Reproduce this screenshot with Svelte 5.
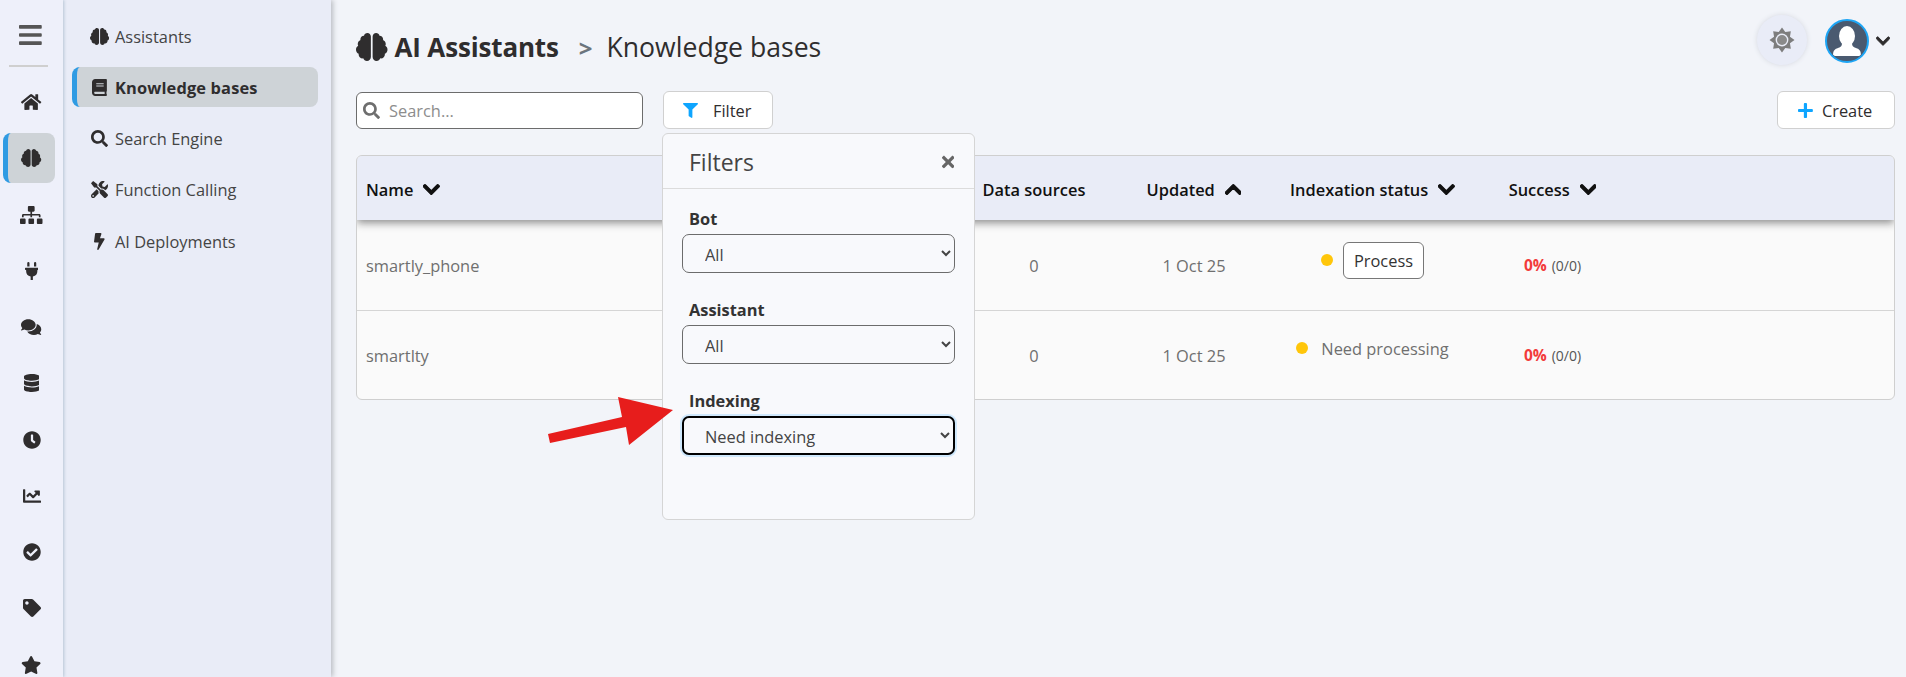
<script>
  const icons = {
    bars: [448, "M16 132h416c8.837 0 16-7.163 16-16V76c0-8.837-7.163-16-16-16H16C7.163 60 0 67.163 0 76v40c0 8.837 7.163 16 16 16zm0 160h416c8.837 0 16-7.163 16-16v-40c0-8.837-7.163-16-16-16H16c-8.837 0-16 7.163-16 16v40c0 8.837 7.163 16 16 16zm0 160h416c8.837 0 16-7.163 16-16v-40c0-8.837-7.163-16-16-16H16c-8.837 0-16 7.163-16 16v40c0 8.837 7.163 16 16 16z"],
    search: [512, "M505 442.7L405.3 343c-4.5-4.5-10.6-7-17-7H372c27.6-35.3 44-79.7 44-128C416 93.1 322.9 0 208 0S0 93.1 0 208s93.1 208 208 208c48.3 0 92.7-16.4 128-44v16.3c0 6.4 2.5 12.5 7 17l99.7 99.7c9.4 9.4 24.6 9.4 33.9 0l28.3-28.3c9.4-9.4 9.4-24.6.1-34zM208 336c-70.7 0-128-57.2-128-128 0-70.7 57.2-128 128-128 70.7 0 128 57.2 128 128 0 70.7-57.2 128-128 128z"],
    down: [448, "M207.029 381.476L12.686 187.132c-9.373-9.373-9.373-24.569 0-33.941l22.667-22.667c9.357-9.357 24.522-9.375 33.901-.04L224 284.505l154.745-154.021c9.379-9.335 24.544-9.317 33.901.04l22.667 22.667c9.373 9.373 9.373 24.569 0 33.941L240.971 381.476c-9.373 9.372-24.569 9.372-33.942 0z"],
    up: [448, "M240.971 130.524l194.343 194.343c9.373 9.373 9.373 24.569 0 33.941l-22.667 22.667c-9.357 9.357-24.522 9.375-33.901.04L224 227.495 69.255 381.516c-9.379 9.335-24.544 9.317-33.901-.04l-22.667-22.667c-9.373-9.373-9.373-24.569 0-33.941L207.03 130.525c9.372-9.373 24.568-9.373 33.941-.001z"],
    filter: [512, "M487.976 0H24.028C2.71 0-8.047 25.866 7.058 40.971L192 225.941V432c0 7.831 3.821 15.17 10.237 19.662l80 55.98C298.02 518.69 320 507.493 320 487.98V225.941l184.947-184.97C520.021 25.896 509.338 0 487.976 0z"],
    plus: [448, "M416 208H272V64c0-17.67-14.33-32-32-32h-32c-17.67 0-32 14.33-32 32v144H32c-17.67 0-32 14.33-32 32v32c0 17.67 14.33 32 32 32h144v144c0 17.67 14.33 32 32 32h32c17.67 0 32-14.33 32-32V304h144c17.67 0 32-14.33 32-32v-32c0-17.67-14.33-32-32-32z"],
    times: [352, "M242.72 256l100.07-100.07c12.28-12.28 12.28-32.19 0-44.48l-22.24-22.24c-12.28-12.28-32.19-12.28-44.48 0L176 189.28 75.93 89.21c-12.28-12.28-32.19-12.28-44.48 0L9.21 111.45c-12.28 12.28-12.28 32.19 0 44.48L109.28 256 9.21 356.07c-12.28 12.28-12.28 32.19 0 44.48l22.24 22.24c12.28 12.28 32.2 12.28 44.48 0L176 322.72l100.07 100.07c12.28 12.28 32.2 12.28 44.48 0l22.24-22.24c12.28-12.28 12.28-32.19 0-44.48L242.72 256z"],
    home: [576, "M280.37 148.26L96 300.11V464a16 16 0 0 0 16 16l112.06-.29a16 16 0 0 0 15.92-16V368a16 16 0 0 1 16-16h64a16 16 0 0 1 16 16v95.64a16 16 0 0 0 16 16.05L464 480a16 16 0 0 0 16-16V300L295.67 148.26a12.19 12.19 0 0 0-15.3 0zM571.6 251.47L488 182.56V44.05a12 12 0 0 0-12-12h-56a12 12 0 0 0-12 12v72.61L318.47 43a48 48 0 0 0-61 0L4.34 251.47a12 12 0 0 0-1.6 16.9l25.5 31A12 12 0 0 0 45.15 301l235.22-193.74a12.19 12.19 0 0 1 15.3 0L530.9 301a12 12 0 0 0 16.9-1.6l25.5-31a12 12 0 0 0-1.7-16.93z"],
    bolt: [320, "M296 160H180.6l42.6-129.8C227.2 15 215.7 0 200 0H56C44 0 33.8 8.9 32.2 20.8l-32 240C-1.7 275.2 9.5 288 24 288h118.7L96.6 482.5c-3.6 15.2 8 29.5 23.3 29.5 8.4 0 16.4-4.4 20.8-12l176-304c9.3-15.9-2.2-36-20.7-36z"],
    star: [576, "M259.3 17.8L194 150.2 47.9 171.5c-26.2 3.8-36.7 36.1-17.7 54.6l105.7 103-25 145.5c-4.5 26.3 23.2 46 46.4 33.7L288 439.6l130.7 68.7c23.2 12.2 50.9-7.4 46.4-33.7l-25-145.5 105.7-103c19-18.5 8.5-50.8-17.7-54.6L382 150.2 316.7 17.8c-11.7-23.6-45.6-23.9-57.4 0z"],
    check: [512, "M504 256c0 136.967-111.033 248-248 248S8 392.967 8 256 119.033 8 256 8s248 111.033 248 248zM227.314 387.314l184-184c6.248-6.248 6.248-16.379 0-22.627l-22.627-22.627c-6.248-6.249-16.379-6.249-22.628 0L216 308.118l-70.059-70.059c-6.248-6.248-16.379-6.248-22.628 0l-22.627 22.627c-6.248 6.248-6.248 16.379 0 22.627l104 104c6.249 6.249 16.379 6.249 22.628.001z"],
    clock: [512, "M256,8C119,8,8,119,8,256S119,504,256,504,504,393,504,256,393,8,256,8Zm92.49,313h0l-20,25a16,16,0,0,1-22.49,2.5h0l-67-49.72a40,40,0,0,1-15-31.23V112a16,16,0,0,1,16-16h32a16,16,0,0,1,16,16V256l58,42.5A16,16,0,0,1,348.49,321Z"],
    tag: [512, "M0 252.118V48C0 21.49 21.49 0 48 0h204.118a48 48 0 0 1 33.941 14.059l211.882 211.882c18.745 18.745 18.745 49.137 0 67.882L293.823 497.941c-18.745 18.745-49.137 18.745-67.882 0L14.059 286.059A48 48 0 0 1 0 252.118zM112 64c-26.51 0-48 21.49-48 48s21.49 48 48 48 48-21.49 48-48-21.49-48-48-48z"],
    database: [448, "M448 73.143v45.714C448 159.143 347.667 192 224 192S0 159.143 0 118.857V73.143C0 32.857 100.333 0 224 0s224 32.857 224 73.143zM448 176v102.857C448 319.143 347.667 352 224 352S0 319.143 0 278.857V176c48.125 33.143 136.208 48.572 224 48.572S399.874 209.143 448 176zm0 160v102.857C448 479.143 347.667 512 224 512S0 479.143 0 438.857V336c48.125 33.143 136.208 48.572 224 48.572S399.874 369.143 448 336z"],
    book: [448, "M448 360V24c0-13.3-10.7-24-24-24H96C43 0 0 43 0 96v320c0 53 43 96 96 96h328c13.3 0 24-10.7 24-24v-16c0-7.5-3.5-14.3-8.9-18.7-4.2-15.4-4.2-59.3 0-74.7 5.4-4.3 8.9-11.1 8.9-18.6zM128 134c0-3.3 2.7-6 6-6h212c3.3 0 6 2.7 6 6v20c0 3.3-2.7 6-6 6H134c-3.3 0-6-2.7-6-6v-20zm0 64c0-3.3 2.7-6 6-6h212c3.3 0 6 2.7 6 6v20c0 3.3-2.7 6-6 6H134c-3.3 0-6-2.7-6-6v-20zm253.4 250H96c-17.7 0-32-14.3-32-32 0-17.6 14.4-32 32-32h285.4c-1.9 17.1-1.9 46.9 0 64z"],
    plug: [384, "M320,32a32,32,0,0,0-64,0v96h64Zm48,128H16A16,16,0,0,0,0,176v32a16,16,0,0,0,16,16H32v32A160.07,160.07,0,0,0,160,412.8V512h64V412.8A160.07,160.07,0,0,0,352,256V224h16a16,16,0,0,0,16-16V176A16,16,0,0,0,368,160ZM128,32a32,32,0,0,0-64,0v96h64Z"],
    sitemap: [640, "M128 352H32c-17.67 0-32 14.33-32 32v96c0 17.67 14.33 32 32 32h96c17.67 0 32-14.33 32-32v-96c0-17.67-14.33-32-32-32zm-24-80h192v48h48v-48h192v48h48v-57.59c0-21.17-17.23-38.41-38.41-38.41H344v-64h40c17.67 0 32-14.33 32-32V32c0-17.67-14.33-32-32-32H256c-17.67 0-32 14.33-32 32v96c0 17.67 14.33 32 32 32h40v64H94.41C73.23 224 56 241.23 56 262.41V320h48v-48zm264 80h-96c-17.67 0-32 14.33-32 32v96c0 17.67 14.33 32 32 32h96c17.67 0 32-14.33 32-32v-96c0-17.67-14.33-32-32-32zm240 0h-96c-17.67 0-32 14.33-32 32v96c0 17.67 14.33 32 32 32h96c17.67 0 32-14.33 32-32v-96c0-17.67-14.33-32-32-32z"],
    comments: [576, "M416 192c0-88.4-93.1-160-208-160S0 103.6 0 192c0 34.3 14.1 65.9 38 92-13.4 30.2-35.5 54.2-35.8 54.5-2.2 2.3-2.8 5.7-1.5 8.7S4.8 352 8 352c36.6 0 66.9-12.3 88.7-25 32.2 15.7 70.3 25 111.3 25 114.9 0 208-71.6 208-160zm122 220c23.9-26 38-57.7 38-92 0-66.9-53.5-124.2-129.3-148.1.9 6.6 1.3 13.3 1.3 20.1 0 105.9-107.7 192-240 192-10.8 0-21.3-.8-31.7-1.9C207.8 439.6 281.8 480 368 480c41 0 79.1-9.2 111.3-25 21.8 12.7 52.1 25 88.7 25 3.2 0 6.1-1.9 7.3-4.8 1.3-2.9.7-6.3-1.5-8.7-.3-.3-22.4-24.2-35.8-54.5z"],
    chart: [512, "M496 384H64V80c0-8.84-7.16-16-16-16H16C7.16 64 0 71.16 0 80v336c0 17.67 14.33 32 32 32h464c8.84 0 16-7.16 16-16v-32c0-8.84-7.16-16-16-16zM464 96H345.94c-21.38 0-32.09 25.85-16.97 40.97l32.4 32.4L288 242.75l-73.37-73.37c-12.5-12.5-32.76-12.5-45.25 0l-68.69 68.69c-6.25 6.25-6.25 16.38 0 22.63l22.62 22.62c6.25 6.25 16.38 6.25 22.63 0L192 237.25l73.37 73.37c12.5 12.5 32.76 12.5 45.25 0l96-96 32.4 32.4c15.12 15.12 40.97 4.41 40.97-16.97V112c.01-8.84-7.15-16-15.99-16z"],
    tools: [512, "M501.1 395.7L384 278.6c-23.1-23.1-57.6-27.6-85.4-13.9L192 158.1V96L64 0 0 64l96 128h62.1l106.6 106.6c-13.6 27.8-9.2 62.3 13.9 85.4l117.1 117.1c14.6 14.6 38.2 14.6 52.7 0l52.7-52.7c14.5-14.6 14.5-38.2 0-52.7zM331.7 225c28.3 0 54.9 11 74.9 31l19.4 19.4c15.8-6.9 30.8-16.5 43.8-29.5 37.1-37.1 49.7-89.3 37.9-136.7-2.2-9-13.5-12.1-20.1-5.5l-74.4 74.4-67.9-11.3L334 98.9l74.4-74.4c6.6-6.6 3.4-17.9-5.7-20.2-47.4-11.7-99.6.9-136.6 37.9-28.5 28.5-41.9 66.1-41.2 103.6l82.1 82.1c8.1-1.9 16.5-2.9 24.7-2.9zm-103.9 82l-56.7-56.7L18.7 402.8c-25 25-25 65.5 0 90.5s65.5 25 90.5 0l123.6-123.6c-7.6-19.9-9.9-41.6-5-62.7zM64 472c-13.2 0-24-10.8-24-24 0-13.3 10.7-24 24-24s24 10.7 24 24c0 13.2-10.7 24-24 24z"],
    brain: [576, "M208 0c-29.9 0-54.7 20.5-61.8 48.2-.8 0-1.4-.2-2.2-.2-35.3 0-64 28.7-64 64 0 4.8.6 9.5 1.7 14C52.5 138 32 166.6 32 200c0 12.6 3.2 24.3 8.3 34.9C16.3 248.7 0 274.3 0 304c0 33.3 20.4 61.9 49.4 73.9-.9 4.6-1.4 9.3-1.4 14.1 0 39.8 32.2 72 72 72 4.1 0 8.1-.5 12-1.2 9.6 28.5 36.2 49.2 68 49.2 39.8 0 72-32.2 72-72V64c0-35.3-28.7-64-64-64zm368 304c0-29.7-16.3-55.3-40.3-69.1 5.2-10.6 8.3-22.3 8.3-34.9 0-33.4-20.5-62-49.7-74 1-4.5 1.7-9.2 1.7-14 0-35.3-28.7-64-64-64-.8 0-1.5.2-2.2.2C422.7 20.5 397.9 0 368 0c-35.3 0-64 28.6-64 64v376c0 39.8 32.2 72 72 72 31.8 0 58.4-20.7 68-49.2 3.9.7 7.9 1.2 12 1.2 39.8 0 72-32.2 72-72 0-4.8-.5-9.5-1.4-14.1 29-12 49.4-40.6 49.4-73.9z"]
  };

  const railItems = ["home", "brain", "sitemap", "plug", "comments", "database", "clock", "chart", "check", "tag", "star"];
  const subItems = [
    { icon: "brain", label: "Assistants" },
    { icon: "book", label: "Knowledge bases", active: true },
    { icon: "search", label: "Search Engine" },
    { icon: "tools", label: "Function Calling" },
    { icon: "bolt", label: "AI Deployments" }
  ];

  // eight pointed sun, outer and inner radius alternate
  const sunPoints = Array.from({ length: 16 }, (_, i) => {
    const r = i % 2 ? 8.6 : 12.5;
    const a = (i * Math.PI) / 8;
    return `${(13 + r * Math.cos(a)).toFixed(2)},${(13 + r * Math.sin(a)).toFixed(2)}`;
  }).join(" ");
</script>

{#snippet fa(name, size, cls = "")}
  <svg class={cls} width={(size * icons[name][0]) / 512} height={size} viewBox="0 0 {icons[name][0]} 512" fill="currentColor" aria-hidden="true"><path d={icons[name][1]} /></svg>
{/snippet}

<div class="app">
  <nav class="rail">
    <div class="burger">{@render fa("bars", 26)}</div>
    <div class="rule"></div>
    {#each railItems as item}
      <div class="rail-item" class:active={item === "brain"}>{@render fa(item, 18)}</div>
    {/each}
  </nav>

  <aside class="sub">
    {#each subItems as item}
      <div class="sub-item" class:active={item.active}>
        <span class="sub-icon">{@render fa(item.icon, 17)}</span>
        <span>{item.label}</span>
      </div>
    {/each}
  </aside>

  <main class="main">
    <header class="top">
      <h1>
        {@render fa("brain", 28)}
        <strong>AI Assistants</strong>
        <span class="sep">&gt;</span>
        <span class="crumb">Knowledge bases</span>
      </h1>
      <div class="user">
        <div class="theme">
          <svg width="26" height="26" viewBox="0 0 26 26" aria-hidden="true">
            <polygon fill="#7d7d7d" points={sunPoints} />
            <circle cx="13" cy="13" r="6.4" fill="#e9ecf7" />
            <circle cx="13" cy="13" r="5" fill="#8a8a8a" />
          </svg>
        </div>
        <svg class="avatar" width="44" height="44" viewBox="0 0 44 44" aria-hidden="true">
          <circle cx="22" cy="22" r="21" fill="#4a5a70" stroke="#1da5f5" stroke-width="2" />
          <clipPath id="av"><circle cx="22" cy="22" r="19.5" /></clipPath>
          <g clip-path="url(#av)" fill="#fff">
            <ellipse cx="22" cy="17" rx="8" ry="10" />
            <path d="M17 24c0 3-1 4-4 5-3 1-5 2-5 8h28c0-6-2-7-5-8-3-1-4-2-4-5z" />
          </g>
        </svg>
        <span class="user-caret">{@render fa("down", 16)}</span>
      </div>
    </header>

    <div class="toolbar">
      <div class="search">
        {@render fa("search", 17)}
        <span>Search...</span>
      </div>
      <div class="filter-wrap">
        <button class="btn filter-btn">{@render fa("filter", 15)}<span>Filter</span></button>
        <div class="popover">
          <div class="pop-head">
            <span>Filters</span>
            {@render fa("times", 18)}
          </div>
          <div class="pop-body">
            <label for="f-bot">Bot</label>
            <select id="f-bot"><option>All</option></select>
            <label for="f-assistant">Assistant</label>
            <select id="f-assistant"><option>All</option></select>
            <label for="f-index">Indexing</label>
            <select id="f-index" class="focused"><option>Need indexing</option></select>
          </div>
        </div>
      </div>
      <button class="btn create">{@render fa("plus", 17)}<span>Create</span></button>
    </div>

    <section class="table">
      <div class="row head">
        <div class="name">Name {@render fa("down", 19)}</div>
        <div>Data sources</div>
        <div>Updated {@render fa("up", 19)}</div>
        <div>Indexation status {@render fa("down", 19)}</div>
        <div>Success {@render fa("down", 19)}</div>
      </div>
      <div class="row body">
        <div class="name">smartly_phone</div>
        <div>0</div>
        <div>1 Oct 25</div>
        <div class="status up"><i class="dot"></i><button class="process">Process</button></div>
        <div class="rate"><b>0%</b> <small>(0/0)</small></div>
      </div>
      <div class="row body">
        <div class="name">smartlty</div>
        <div>0</div>
        <div>1 Oct 25</div>
        <div class="status up2"><i class="dot"></i><span>Need processing</span></div>
        <div class="rate"><b>0%</b> <small>(0/0)</small></div>
      </div>
    </section>
  </main>

  <svg class="arrow" width="140" height="60" viewBox="540 392 140 60" aria-hidden="true">
    <polygon fill="#e71d1c" points="548,434 622,417 618,397 673,410 629,445 626,427 550,443" />
  </svg>
</div>

<style>
  :global(body) { margin: 0; background: #f2f4f9; }
  .app {
    display: flex;
    height: 677px;
    overflow: hidden;
    position: relative;
    font-family: "Open Sans", "Noto Sans", sans-serif;
    font-size: 16.4px;
    color: #333;
    background: #f2f4f9;
  }
  svg { display: block; flex: none; }

  .rail {
    width: 63px;
    flex: none;
    background: #eef0fa;
    box-shadow: 1px 0 3px #b5c4d4;
    position: relative;
    z-index: 1;
    display: flex;
    flex-direction: column;
    padding-top: 22px;
    box-sizing: border-box;
  }
  .burger { display: flex; justify-content: center; flex: none; height: 28px; color: #555; margin-left: -2px; }
  .rule { height: 2px; flex: none; background: #cfcfcf; margin: 15px 15px 7px 9px; }
  .rail-item {
    height: 50px;
    flex: none;
    margin: 3.14px 8px 3.14px 3px;
    border-left: 5px solid transparent;
    border-radius: 8px;
    display: flex;
    align-items: center;
    justify-content: center;
    color: #2f2d2e;
  }
  .rail-item.active { background: #ced3d7; border-left-color: #2f9be3; }

  .sub {
    width: 268px;
    flex: none;
    background: #e9ecf7;
    box-shadow: 2px 0 5px #b9bcc2;
    box-sizing: border-box;
    padding: 16px 13px 0 9px;
    position: relative;
  }
  .sub-item {
    height: 40px;
    margin-bottom: 11.3px;
    padding-left: 13px;
    border-left: 5px solid transparent;
    border-radius: 8px;
    display: flex;
    align-items: center;
    color: #444;
  }
  .sub-icon { width: 19px; margin-right: 6px; color: #2f2d2e; display: flex; justify-content: center; }
  .sub-item.active { background: #ced3d7; border-left-color: #2f9be3; font-weight: 700; color: #2f2d2e; letter-spacing: 0.15px; }

  .main { flex: 1; min-width: 0; padding: 0 11px 0 25px; }
  .top { display: flex; justify-content: space-between; align-items: flex-start; height: 91px; }
  h1 {
    margin: 29px 0 0;
    display: flex;
    align-items: center;
    height: 36px;
    font-size: 26px;
    font-weight: 400;
    color: #2f2d2e;
  }
  h1 strong { font-weight: 700; margin-left: 7px; letter-spacing: -0.15px; }
  .sep { color: #6c757d; font-weight: 700; margin: 0 14px 0 20px; font-size: 24px; }
  .crumb { font-size: 26.6px; }
  .user { display: flex; align-items: center; margin-top: 15px; margin-right: 5px; }
  .theme {
    width: 50px;
    height: 50px;
    border-radius: 50%;
    background: #e9ecf7;
    box-shadow: 0 0 5px #d5d8e0;
    display: flex;
    align-items: center;
    justify-content: center;
    margin-right: 18px;
  }
  .avatar { margin-top: 2px; }
  .user-caret { margin: 2px 0 0 7px; color: #2f2d2e; stroke: currentColor; stroke-width: 30; }

  .toolbar { display: flex; align-items: center; height: 38px; }
  .search {
    width: 287px;
    height: 37px;
    box-sizing: border-box;
    background: #fff;
    border: 1px solid #6c6c6c;
    border-radius: 6px;
    display: flex;
    align-items: center;
    gap: 9px;
    padding-left: 6px;
    color: #6e6e6e;
  }
  .search span { color: #8d8d8d; }
  .btn {
    font: inherit;
    height: 38px;
    box-sizing: border-box;
    background: #fff;
    border: 1px solid #d0d0d0;
    border-radius: 6px;
    display: flex;
    align-items: center;
    color: #2f2d2e;
  }
  .btn svg { color: #0ea5ff; }
  .filter-wrap { position: relative; margin-left: 20px; }
  .filter-btn { width: 110px; padding-left: 19px; gap: 15px; }
  .create { margin-left: auto; width: 118px; padding-left: 20px; gap: 9px; }

  .popover {
    position: absolute;
    z-index: 3;
    top: 42px;
    left: -1px;
    width: 313px;
    height: 387px;
    box-sizing: border-box;
    background: #f8f9fc;
    border: 1px solid #d5d5d5;
    border-radius: 6px;
  }
  .pop-head {
    height: 55px;
    box-sizing: border-box;
    border-bottom: 1px solid #dcdcdc;
    display: flex;
    align-items: center;
    justify-content: space-between;
    padding: 2px 20px 0 26px;
    font-size: 23px;
    color: #444;
  }
  .pop-head svg { color: #666; }
  .pop-body { padding: 18px 19px 0; display: flex; flex-direction: column; }
  label {
    font-weight: 700;
    margin: 0 0 3px 7px;
    height: 24px;
    line-height: 24px;
    color: #333;
  }
  select {
    font: inherit;
    height: 39px;
    box-sizing: border-box;
    background-color: #f8f9fc;
    color: #444;
    border: 1px solid #6c6c6c;
    border-radius: 7px;
    padding-left: 18px;
    padding-top: 2px;
    margin-bottom: 25px;
  }
  select.focused {
    border: 2px solid #000;
    padding-left: 17px;
    box-shadow: 0 0 0 2px #cfe8fc;
  }

  .table {
    margin-top: 26px;
    border: 1px solid #cfcfcf;
    border-radius: 6px;
    background: #fafafa;
    overflow: hidden;
  }
  .row {
    display: grid;
    grid-template-columns: 613px 128px 192px 165px 195px 1fr;
    align-items: center;
    text-align: center;
    color: #6f6f6f;
  }
  .row > div { display: flex; align-items: center; justify-content: center; white-space: nowrap; }
  .row > .name { justify-content: flex-start; padding-left: 9px; }
  .head {
    height: 64px;
    box-sizing: border-box;
    padding-top: 3px;
    background: #e9ecf7;
    color: #111;
    font-weight: 600;
    box-shadow: 0 3px 8px #8e8e8e;
    position: relative;
    stroke: currentColor;
    stroke-width: 30;
  }
  .head > div { gap: 10px; }
  .body { height: 90px; }
  .body + .body { height: 88px; border-top: 1px solid #d5d5d5; }
  .status { gap: 10px; }
  .status.up { transform: translateY(-5px); }
  .status.up2 { transform: translateY(-7px); gap: 13px; }
  .dot { width: 12px; height: 12px; border-radius: 50%; background: #ffc60a; flex: none; }
  .process {
    font: inherit;
    width: 81px;
    height: 37px;
    background: #fff;
    border: 1px solid #777;
    border-radius: 6px;
    color: #333;
    padding: 0;
  }
  .rate { gap: 5px; }
  .rate b { color: #f23a3a; font-size: 15.5px; }
  .rate small { font-size: 14px; color: #555; }

  .arrow { position: absolute; z-index: 4; left: 540px; top: 392px; }
</style>
